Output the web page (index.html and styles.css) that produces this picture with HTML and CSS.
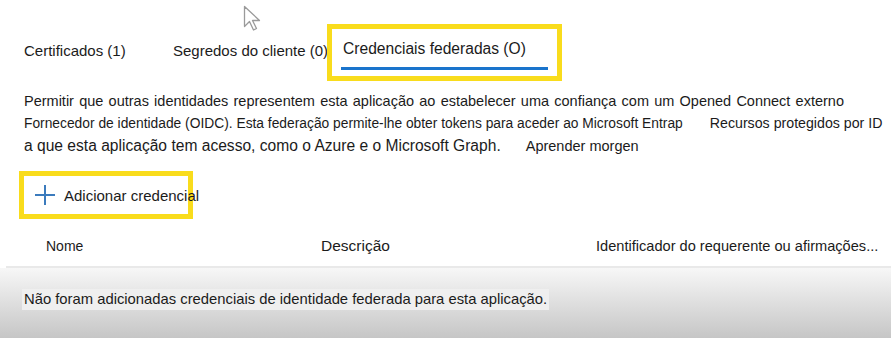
FILE: index.html
```html
<!DOCTYPE html>
<html lang="pt">
<head>
<meta charset="UTF-8">
<title>Credenciais federadas</title>
<link rel="stylesheet" href="styles.css">
</head>
<body>
  <div class="page">
    <!-- tabs -->
    <div class="tabs">
      <div class="tab tab-cert">Certificados (1)</div>
      <div class="tab tab-secret">Segredos do cliente (0)</div>
      <div class="tab tab-active highlight">
        <span class="tab-label">Credenciais federadas (O)</span>
        <span class="tab-bar"></span>
      </div>
    </div>

    <div class="intro">
      <p class="line line1">Permitir que outras identidades representem esta aplicação ao estabelecer uma confiança com um Opened Connect externo</p>
      <p class="line line2"><span>Fornecedor de identidade (OIDC). Esta federação permite-lhe obter tokens para aceder ao Microsoft Entrap</span><span class="gap">Recursos protegidos por ID</span></p>
      <p class="line line3"><span class="big">a que esta aplicação tem acesso, como o Azure e o Microsoft Graph.</span><span class="learn">Aprender morgen</span></p>
    </div>

    <div class="toolbar">
      <div class="add-btn highlight">
        <svg class="plus" width="22" height="22" viewBox="0 0 22 22"><path d="M11 1v20M1 11h20" stroke="#3b7bbd" stroke-width="2" fill="none"/></svg>
        <span>Adicionar credencial</span>
      </div>
    </div>

    <div class="thead">
      <div class="col col-name">Nome</div>
      <div class="col col-desc">Descrição</div>
      <div class="col col-id">Identificador do requerente ou afirmações...</div>
    </div>
  </div>

  <div class="empty">
    <span class="empty-text">Não foram adicionadas credenciais de identidade federada para esta aplicação.</span>
  </div>

  <svg class="cursor" width="20" height="28" viewBox="0 0 20 28"><path d="M1.5 1.5v20l5-5 4 8.5 3-1.5-4-8h7z" fill="#fff" stroke="#9a9a9a" stroke-width="1.3" stroke-linejoin="round"/></svg>
</body>
</html>
```

FILE: styles.css
```css
body {
    margin: 0;
    width: 891px;
    height: 338px;
    overflow: hidden;
    background: #fff;
    font-family: "Liberation Sans", Arial, sans-serif;
    color: #1b1b1b;
    position: relative;
}

.page {
    padding-left: 24px;
}

/* tabs */
.tabs {
    display: flex;
    align-items: flex-start;
    padding-top: 24px;
    height: 57px;
}

.tab {
    font-size: 15px;
    line-height: 17px;
    padding-top: 18px;
    white-space: nowrap;
}

.tab-cert {
    width: 149px;
}

.tab-secret {
    width: 154px;
}

.highlight {
    border: 5px solid #f9dc1c;
}

.tab-active {
    box-sizing: border-box;
    height: 57px;
    width: 235px;
    padding: 11px 0 0 11px;
    display: flex;
    flex-direction: column;
    font-size: 15.6px;
}

.tab-label {
    line-height: 18px;
}

.tab-bar {
    display: block;
    width: 207px;
    height: 3px;
    margin: 9px 0 0 -2px;
    background: #1a74cc;
}

/* intro text */
.intro {
    padding-top: 9px;
}

.line {
    margin: 0;
    white-space: nowrap;
}

.line1 {
    font-size: 14.5px;
    line-height: 22px;
    word-spacing: 1.2px;
}

.line2 {
    font-size: 13.8px;
    line-height: 23px;
}

.line2 .gap {
    margin-left: 27px;
    font-size: 14.2px;
}

.line3 {
    line-height: 22px;
}

.line3 .big {
    font-size: 15.6px;
}

.line3 .learn {
    font-size: 14.5px;
    margin-left: 25px;
}

/* add button */
.toolbar {
    padding-top: 14px;
    margin-left: -5px;
}

.add-btn {
    display: flex;
    align-items: center;
    box-sizing: border-box;
    width: 174px;
    height: 48px;
    padding-left: 10px;
    font-size: 15px;
}

.plus {
    flex-shrink: 0;
}

.add-btn span {
    margin-left: 8px;
    white-space: nowrap;
}

/* table header */
.thead {
    display: flex;
    align-items: center;
    height: 49px;
    padding-top: 6px;
    box-sizing: border-box;
    font-size: 14px;
    border-bottom: 2px solid #e9e9e9;
    margin-left: -18px;
    padding-left: 40px;
}

.col-name {
    width: 275px;
}

.col-desc {
    width: 275px;
    font-size: 15.5px;
}

.col-id {
    font-size: 14.6px;
    white-space: nowrap;
}

/* empty state */
.empty {
    height: 70px;
    background: linear-gradient(#f7f7f7, #c6c6c6);
    padding: 21px 0 0 22px;
    box-sizing: border-box;
}

.empty-text {
    display: inline-block;
    background: #efefef;
    font-size: 14.8px;
    line-height: 21px;
    padding: 0 2px;
}

.cursor {
    position: absolute;
    left: 243px;
    top: 5px;
}
```
